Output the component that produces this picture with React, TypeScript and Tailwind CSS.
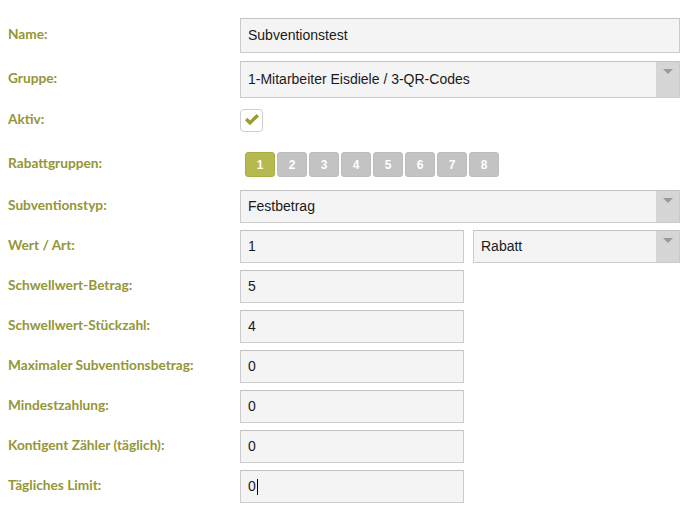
import React from "react";

const labelCls =
  "w-[240px] shrink-0 pl-2 pb-[3px] text-[13.7px] font-bold text-[#949638] [font-family:Lato,'Open_Sans',sans-serif]";

const fieldCls =
  "h-full flex items-center bg-[#f4f4f4] border border-[#cbcbcb] border-t-[#c2c2c2] text-[14px] text-[#1a1a1a] [font-family:'Liberation_Sans',Arial,sans-serif]";

const Caret = () => <span className="inline-block w-px h-[16px] bg-black ml-px" />;

const SelectBox = ({ value, className = "" }: { value: string; className?: string }) => (
  <div className={`${fieldCls} ${className}`}>
    <span className="flex-1 pl-[7px]">{value}</span>
    <div className="w-[23px] h-full bg-[#d6d6d6] flex justify-center pt-[7px]">
      <div className="w-0 h-0 border-l-[5px] border-r-[5px] border-t-[5px] border-l-transparent border-r-transparent border-t-[#9a9a9a]" />
    </div>
  </div>
);

const Row = ({
  label,
  h,
  mb,
  children,
}: {
  label: string;
  h: string;
  mb: string;
  children: React.ReactNode;
}) => (
  <div className={`flex items-center ${h} ${mb}`}>
    <div className={labelCls}>{label}</div>
    <div className="flex-1 h-full flex items-center">{children}</div>
  </div>
);

const SmallInput = ({ value, caret }: { value: string; caret?: boolean }) => (
  <div className={`${fieldCls} pl-[7px] w-[224px]`}>
    {value}
    {caret && <Caret />}
  </div>
);

export default function App() {
  const groups = ["1", "2", "3", "4", "5", "6", "7", "8"];
  return (
    <div className="w-[694px] h-[513px] bg-white pt-[18px] pr-[14px] overflow-hidden">
      <Row label="Name:" h="h-[35px]" mb="mb-[8px]">
        <div className={`${fieldCls} pl-[7px] w-full`}>Subventionstest</div>
      </Row>
      <Row label="Gruppe:" h="h-[37px]" mb="mb-[11px]">
        <SelectBox value="1-Mitarbeiter Eisdiele / 3-QR-Codes" className="w-full" />
      </Row>
      <Row label="Aktiv:" h="h-[23px]" mb="mb-[20px]">
        <div className="w-[23px] h-[23px] rounded-[4px] border border-[#cfcfcf] bg-white flex items-center justify-center">
          <svg width="16" height="13" viewBox="0 0 16 13">
            <path d="M1 6.2 L3.4 3.8 L6 6.4 L12.6 0 L15 2.4 L6 11.2 Z" fill="#9a9b30" />
          </svg>
        </div>
      </Row>
      <Row label="Rabattgruppen:" h="h-[25px]" mb="mb-[13px]">
        <div className="flex gap-[2px] pl-[5px] h-full">
          {groups.map((g, i) => (
            <div
              key={g}
              className={`w-[30px] h-[25px] rounded-[3px] flex items-center justify-center text-[12px] font-bold text-white [font-family:'Liberation_Sans',Arial,sans-serif] ${
                i === 0 ? "bg-[#b5b950] border border-[#a9ad45]" : "bg-[#c3c3c3] border border-[#bdbdbd]"
              }`}
            >
              {g}
            </div>
          ))}
        </div>
      </Row>
      <Row label="Subventionstyp:" h="h-[33px]" mb="mb-[7px]">
        <SelectBox value="Festbetrag" className="w-full" />
      </Row>
      <Row label="Wert / Art:" h="h-[33px]" mb="mb-[7px]">
        <div className="flex w-full h-full gap-[9px]">
          <div className={`${fieldCls} pl-[7px] w-[224px] shrink-0`}>1</div>
          <SelectBox value="Rabatt" className="flex-1" />
        </div>
      </Row>
      <Row label="Schwellwert-Betrag:" h="h-[33px]" mb="mb-[7px]">
        <SmallInput value="5" />
      </Row>
      <Row label="Schwellwert-Stückzahl:" h="h-[33px]" mb="mb-[7px]">
        <SmallInput value="4" />
      </Row>
      <Row label="Maximaler Subventionsbetrag:" h="h-[33px]" mb="mb-[7px]">
        <SmallInput value="0" />
      </Row>
      <Row label="Mindestzahlung:" h="h-[33px]" mb="mb-[7px]">
        <SmallInput value="0" />
      </Row>
      <Row label="Kontigent Zähler (täglich):" h="h-[33px]" mb="mb-[7px]">
        <SmallInput value="0" />
      </Row>
      <Row label="Tägliches Limit:" h="h-[33px]" mb="mb-[7px]">
        <SmallInput value="0" caret />
      </Row>
    </div>
  );
}
